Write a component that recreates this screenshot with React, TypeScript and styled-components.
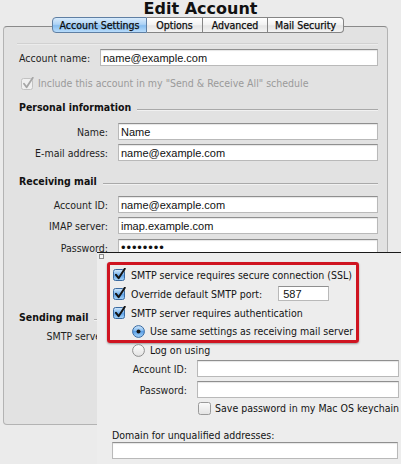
import React from "react";
import styled, { createGlobalStyle } from "styled-components";

const ui = `"DejaVu Sans Condensed", "DejaVu Sans", Verdana, sans-serif`;
const fieldFont = `"Liberation Sans", Arial, sans-serif`;

const GlobalStyle = createGlobalStyle`
  html, body {
    margin: 0;
    padding: 0;
    background: #ebebeb;
    overflow: hidden;
  }
  body {
    font-family: ${ui};
    font-stretch: condensed;
  }
`;

export default function App() {
  return (
    <Window>
      <GlobalStyle />
      <Title>Edit Account</Title>
      <TabRow>
        <Tab $w={95} $active>Account Settings</Tab>
        <Tab $w={56}>Options</Tab>
        <Tab $w={65}>Advanced</Tab>
        <Tab $w={76}>Mail Security</Tab>
      </TabRow>

      <Panel>
        <GroupRule />
        <Row $mt={4}>
          <Label $w={81} $left>Account name:</Label>
          <Field>name@example.com</Field>
        </Row>
        <Row $mt={10} $h={14}>
          <CheckRow $ml={2}>
            <CheckBox state="disabled" />
            <Muted>Include this account in my "Send &amp; Receive All" schedule</Muted>
          </CheckRow>
        </Row>

        <SectionHead $mt={10}>
          <SectionTitle>Personal information</SectionTitle>
          <SectionLine />
        </SectionHead>
        <Row $mt={9}>
          <Label $w={99}>Name:</Label>
          <Field>Name</Field>
        </Row>
        <Row $mt={4}>
          <Label $w={99}>E-mail address:</Label>
          <Field>name@example.com</Field>
        </Row>

        <SectionHead $mt={13}>
          <SectionTitle>Receiving mail</SectionTitle>
          <SectionLine />
        </SectionHead>
        <Row $mt={8}>
          <Label $w={99}>Account ID:</Label>
          <Field>name@example.com</Field>
        </Row>
        <Row $mt={4}>
          <Label $w={99}>IMAP server:</Label>
          <Field>imap.example.com</Field>
        </Row>
        <Row $mt={5}>
          <Label $w={99}>Password:</Label>
          <Field>
            <Dots>••••••••</Dots>
          </Field>
        </Row>

        <SectionHead $mt={54}>
          <SectionTitle>Sending mail</SectionTitle>
          <SectionLine />
        </SectionHead>
        <Row $mt={3}>
          <Label $w={99}>SMTP server:</Label>
          <Field>smtp.example.com</Field>
        </Row>
      </Panel>

      <Overlay>
        <Grip />
        <Callout>
          <OptionRow>
            <CheckBox state="on" />
            <span>SMTP service requires secure connection (SSL)</span>
          </OptionRow>
          <OptionRow>
            <CheckBox state="on" />
            <span>Override default SMTP port:</span>
            <PortField>587</PortField>
          </OptionRow>
          <OptionRow>
            <CheckBox state="on" />
            <span>SMTP server requires authentication</span>
          </OptionRow>
          <OptionRow $indent={19} $h={18}>
            <Radio selected />
            <span>Use same settings as receiving mail server</span>
          </OptionRow>
        </Callout>

        <OptionRow $indent={35} $h={14}>
          <Radio />
          <span>Log on using</span>
        </OptionRow>
        <Row $mt={3}>
          <Label $w={100}>Account ID:</Label>
          <Field $w={202} />
        </Row>
        <Row $mt={4}>
          <Label $w={100}>Password:</Label>
          <Field $w={202} />
        </Row>
        <Row $mt={3} $h={14}>
          <CheckRow $ml={101}>
            <CheckBox state="off" />
            <span>Save password in my Mac OS keychain</span>
          </CheckRow>
        </Row>
        <DomainLabel>Domain for unqualified addresses:</DomainLabel>
        <DomainField />
      </Overlay>
    </Window>
  );
}

// controls

function CheckBox({ state }: { state: "on" | "off" | "disabled" }) {
  if (state === "on") {
    return (
      <svg width="13" height="13" viewBox="0 0 13 13">
        <defs>
          <linearGradient id="cbBlue" x1="0" y1="0" x2="0" y2="1">
            <stop offset="0" stopColor="#d6ebfd" />
            <stop offset="0.45" stopColor="#7fb8ef" />
            <stop offset="0.5" stopColor="#5b9fe6" />
            <stop offset="1" stopColor="#a8d6fb" />
          </linearGradient>
        </defs>
        <rect x="0.5" y="1.5" width="11" height="11" rx="2" fill="url(#cbBlue)" stroke="#3a6aa0" />
        <path d="M3 6.8 L5.6 10.2 L11.8 0.8" fill="none" stroke="#141414" strokeWidth="2" strokeLinecap="round" strokeLinejoin="round" />
      </svg>
    );
  }
  if (state === "disabled") {
    return (
      <svg width="13" height="13" viewBox="0 0 13 13">
        <rect x="0.5" y="1.5" width="11" height="11" rx="2" fill="#f0f0f0" stroke="#c2c2c2" />
        <path d="M3 6.8 L5.6 10.2 L11.8 0.8" fill="none" stroke="#a6a6a6" strokeWidth="1.8" strokeLinecap="round" strokeLinejoin="round" />
      </svg>
    );
  }
  return (
    <svg width="13" height="13" viewBox="0 0 13 13">
      <defs>
        <linearGradient id="cbWhite" x1="0" y1="0" x2="0" y2="1">
          <stop offset="0" stopColor="#fbfbfb" />
          <stop offset="1" stopColor="#e3e3e3" />
        </linearGradient>
      </defs>
      <rect x="0.5" y="0.5" width="12" height="12" rx="2" fill="url(#cbWhite)" stroke="#9a9a9a" />
    </svg>
  );
}

function Radio({ selected }: { selected?: boolean }) {
  return (
    <svg width="13" height="13" viewBox="0 0 13 13">
      <defs>
        <linearGradient id="rbBlue" x1="0" y1="0" x2="0" y2="1">
          <stop offset="0" stopColor="#d6ebfd" />
          <stop offset="0.45" stopColor="#7fb8ef" />
          <stop offset="0.5" stopColor="#5b9fe6" />
          <stop offset="1" stopColor="#a8d6fb" />
        </linearGradient>
        <linearGradient id="rbWhite" x1="0" y1="0" x2="0" y2="1">
          <stop offset="0" stopColor="#fdfdfd" />
          <stop offset="1" stopColor="#e2e2e2" />
        </linearGradient>
      </defs>
      <circle
        cx="6.5"
        cy="6.5"
        r="5.9"
        fill={selected ? "url(#rbBlue)" : "url(#rbWhite)"}
        stroke={selected ? "#3a6aa0" : "#8e8e8e"}
      />
      {selected && <circle cx="6.5" cy="6.5" r="2" fill="#161616" />}
    </svg>
  );
}

// layout

const Window = styled.div`
  position: relative;
  width: 401px;
  height: 464px;
  overflow: hidden;
  background: #ebebeb;
  color: #141414;
  font-size: 10.5px;
`;

const Title = styled.div`
  height: 17px;
  line-height: 17px;
  text-align: center;
  font-size: 16px;
  font-weight: bold;
  font-stretch: normal;
  font-family: "DejaVu Sans", sans-serif;
  color: #111;
`;

const TabRow = styled.div`
  position: relative;
  z-index: 2;
  display: flex;
  justify-content: center;
  padding-right: 5px;
  height: 16px;
`;

const Tab = styled.div<{ $w: number; $active?: boolean }>`
  width: ${(p) => p.$w}px;
  box-sizing: border-box;
  display: flex;
  align-items: center;
  justify-content: center;
  font-size: 10.5px;
  color: #0c0c0c;
  -webkit-text-stroke: 0.25px #0c0c0c;
  border: 1px solid ${(p) => (p.$active ? "#5f7fa3" : "#858585")};
  border-left: none;
  background: ${(p) =>
    p.$active
      ? "linear-gradient(#d8ebfc 0%, #aed3f5 45%, #86bdef 55%, #b8dcfb 100%)"
      : "linear-gradient(#ffffff 0%, #f1f1f1 50%, #e4e4e4 55%, #f3f3f3 100%)"};
  &:first-child {
    border-left: 1px solid #5f7fa3;
    border-radius: 4px 0 0 4px;
  }
  &:last-child {
    border-radius: 0 4px 4px 0;
  }
`;

const Panel = styled.div`
  box-sizing: border-box;
  margin: -7px 0 0 3px;
  width: 385px;
  height: 399px;
  padding: 16px 9px 0 15px;
  background: #e2e2e2;
  border: 1px solid #b3b3b3;
  border-top-color: #8a8a8a;
  border-radius: 4px;
`;

const GroupRule = styled.div`
  margin-left: -2px;
  height: 1px;
  background: #d1d1d1;
  border-bottom: 1px solid #ececec;
`;

const Row = styled.div<{ $mt: number; $h?: number }>`
  display: flex;
  align-items: center;
  margin-top: ${(p) => p.$mt}px;
  height: ${(p) => p.$h ?? 17}px;
`;

const Label = styled.div<{ $w: number; $left?: boolean }>`
  flex: none;
  box-sizing: border-box;
  width: ${(p) => p.$w}px;
  padding-right: ${(p) => (p.$left ? 0 : 10)}px;
  text-align: ${(p) => (p.$left ? "left" : "right")};
  color: #1e1e1e;
  white-space: nowrap;
`;

const Field = styled.div<{ $w?: number }>`
  box-sizing: border-box;
  ${(p) => (p.$w ? `width: ${p.$w}px; flex: none;` : "flex: 1;")}
  height: 17px;
  display: flex;
  align-items: center;
  padding: 0 2px;
  background: #fff;
  border: 1px solid #b9b9b9;
  border-top-color: #8f8f8f;
  box-shadow: inset 0 1px 1px rgba(0, 0, 0, 0.1);
  font-family: ${fieldFont};
  font-size: 11px;
  color: #111;
  white-space: nowrap;
  overflow: hidden;
`;

const Dots = styled.span`
  font-size: 13px;
  letter-spacing: 0.9px;
  line-height: 1;
`;

const CheckRow = styled.div<{ $ml: number }>`
  display: flex;
  align-items: center;
  gap: 4px;
  margin-left: ${(p) => p.$ml}px;
  white-space: nowrap;
  svg {
    flex: none;
  }
`;

const Muted = styled.span`
  color: #9a9a9a;
`;

const SectionHead = styled.div<{ $mt: number }>`
  display: flex;
  align-items: center;
  gap: 6px;
  height: 14px;
  margin-top: ${(p) => p.$mt}px;
`;

const SectionTitle = styled.div`
  font-weight: bold;
  color: #111;
  white-space: nowrap;
`;

const SectionLine = styled.div`
  flex: 1;
  height: 1px;
  margin-top: 5px;
  background: #a9a9a9;
  border-bottom: 1px solid #f1f1f1;
`;

// overlay snippet

const Overlay = styled.div`
  position: absolute;
  left: 97px;
  top: 252px;
  width: 320px;
  height: 240px;
  background: #ededed;
  border-top: 1px solid #1a1a1a;
`;

const Grip = styled.div`
  width: 5px;
  height: 5px;
  margin: 1px 0 0 2px;
  box-sizing: border-box;
  border: 1px solid #8c8c8c;
  background: #f6f6f6;
`;

const Callout = styled.div`
  width: 252px;
  box-sizing: border-box;
  margin: 3px 0 0 10px;
  padding-left: 3px;
  border: 3px solid #cf1421;
  border-radius: 3px;
  box-shadow: 0 1px 2px rgba(0, 0, 0, 0.35);
`;

const OptionRow = styled.div<{ $indent?: number; $h?: number }>`
  display: flex;
  align-items: center;
  gap: 5px;
  height: ${(p) => p.$h ?? 19}px;
  margin-left: ${(p) => p.$indent ?? 0}px;
  white-space: nowrap;
  color: #141414;
  svg {
    flex: none;
  }
`;

const PortField = styled.div`
  box-sizing: border-box;
  width: 51px;
  height: 15px;
  margin-left: 11px;
  padding-left: 4px;
  display: flex;
  align-items: center;
  background: #fff;
  border: 1px solid #b9b9b9;
  border-top-color: #8f8f8f;
  font-family: ${fieldFont};
  font-size: 11px;
  color: #111;
`;

const DomainLabel = styled.div`
  margin: 13px 0 0 15px;
  height: 14px;
  line-height: 14px;
  color: #141414;
`;

const DomainField = styled.div`
  box-sizing: border-box;
  width: 286px;
  height: 17px;
  margin-left: 15px;
  background: #fff;
  border: 1px solid #b9b9b9;
  border-top-color: #8f8f8f;
  box-shadow: inset 0 1px 1px rgba(0, 0, 0, 0.1);
`;
